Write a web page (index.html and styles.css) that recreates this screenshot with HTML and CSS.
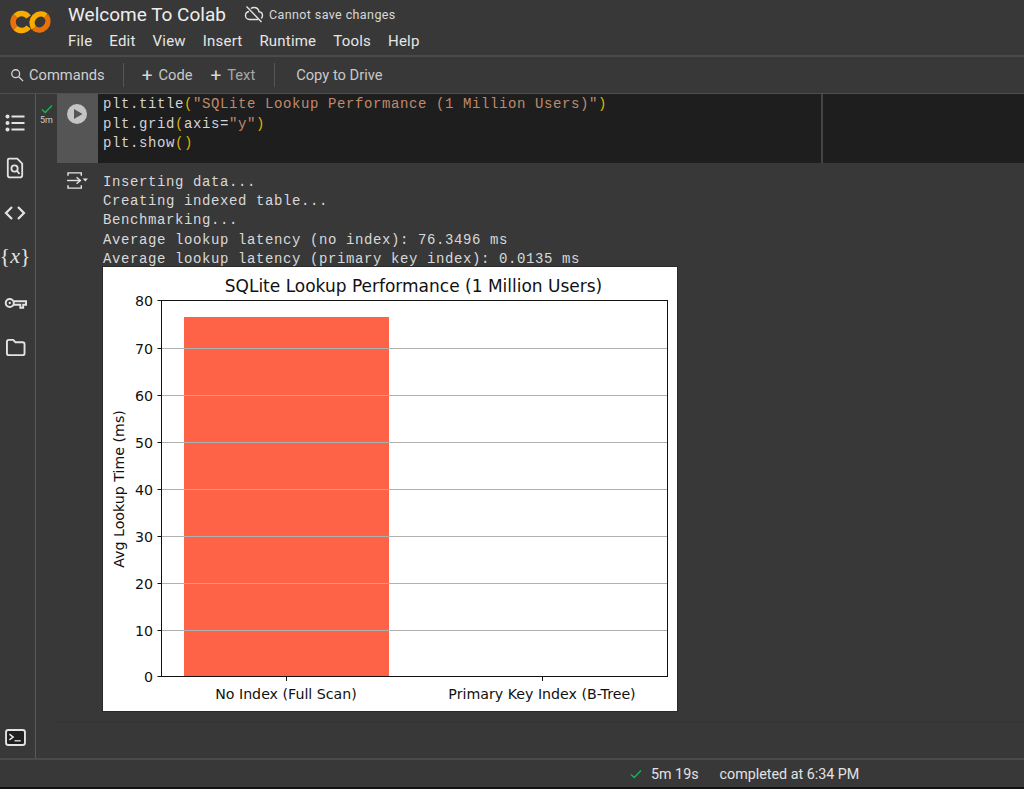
FILE: index.html
```html
<html>
<head>
    <link rel="stylesheet" href="styles.css">
</head>
<body>
    <header class="top">
        <svg class="logo" viewBox="0 0 42 26" width="42" height="26" fill="none" stroke-width="5.5">
            <path d="M18.5 8 A8.5 8.5 0 0 0 5.5 7" stroke="#f9ab00"/>
            <path d="M5.5 7 A8.5 8.5 0 0 0 5.5 19" stroke="#e8710a"/>
            <path d="M5.5 19 A8.5 8.5 0 0 0 18.5 18" stroke="#f9ab00"/>
            <path d="M23.9 19.1 A8.7 8.7 0 0 1 36.1 6.9" stroke="#f9ab00"/>
            <path d="M36.1 6.9 A8.7 8.7 0 0 1 23.9 19.1" stroke="#e8710a"/>
        </svg>
        <div class="top-text">
            <div class="title-row">
                <span class="doc-title">Welcome To Colab</span>
                <svg class="cloud" viewBox="0 0 20 20" width="20" height="20" fill="none" stroke="#e3e3e3" stroke-width="1.4">
                    <path d="M5 7.5 C2.5 8 1.5 9.8 1.5 11.5 C1.5 13.8 3.3 15.5 5.5 15.5 H14"/>
                    <path d="M6.8 4.5 C7.8 3.8 8.8 3.5 10 3.5 C12.6 3.5 14.6 5.4 15 7.8 C17 8 18.5 9.6 18.5 11.6 C18.5 12.8 18 13.8 17.2 14.5"/>
                    <path d="M2.5 2.5 L17.5 18"/>
                </svg>
                <span class="save-note">Cannot save changes</span>
            </div>
            <nav class="menu">
                <span>File</span>
                <span>Edit</span>
                <span>View</span>
                <span>Insert</span>
                <span>Runtime</span>
                <span>Tools</span>
                <span>Help</span>
            </nav>
        </div>
    </header>

    <div class="toolbar">
        <div class="tool tool-commands">
            <svg viewBox="0 0 16 16" width="14" height="14" fill="none" stroke="#d5d5d5" stroke-width="1.5">
                <circle cx="6.5" cy="6.5" r="4.5"/>
                <path d="M10 10 L15 15"/>
            </svg>
            <span>Commands</span>
        </div>
        <div class="divider"></div>
        <div class="tool tool-add"><b>+</b><span>Code</span></div>
        <div class="tool tool-add tool-text"><b>+</b><span>Text</span></div>
        <div class="divider divider-drive"></div>
        <div class="tool">Copy to Drive</div>
    </div>

    <div class="workspace">
        <aside class="rail">
            <div class="rail-icons">
                <svg viewBox="0 0 20 20" width="20" height="20" fill="#e3e3e3">
                    <circle cx="2.5" cy="3.5" r="2"/><circle cx="2.5" cy="10" r="2"/><circle cx="2.5" cy="16.5" r="2"/>
                    <rect x="6.5" y="2.5" width="13" height="2"/><rect x="6.5" y="9" width="13" height="2"/><rect x="6.5" y="15.5" width="13" height="2"/>
                </svg>
                <svg viewBox="0 0 20 24" width="18" height="22" fill="none" stroke="#e3e3e3" stroke-width="2">
                    <path d="M3.5 1.5 H12.5 L18 7 V20 Q18 22.5 15.5 22.5 H4.5 Q2 22.5 2 20 V3 Q2 1.5 3.5 1.5 Z"/>
                    <circle cx="9.5" cy="12.5" r="3.5"/>
                    <path d="M12 15 L15 18.5"/>
                </svg>
                <svg viewBox="0 0 22 16" width="22" height="16" fill="none" stroke="#e3e3e3" stroke-width="2.2">
                    <path d="M8 2 L2 8 L8 14"/>
                    <path d="M14 2 L20 8 L14 14"/>
                </svg>
                <div class="var-icon">{<i>x</i>}</div>
                <svg viewBox="0 0 24 14" width="23" height="14" fill="none" stroke="#e3e3e3" stroke-width="2">
                    <circle cx="6" cy="7" r="4.2"/>
                    <circle cx="6" cy="7" r="1.2" fill="#e3e3e3" stroke="none"/>
                    <path d="M10 5.2 H23 V8.8 H20 V12 H17 V8.8 H10"/>
                </svg>
                <svg viewBox="0 0 22 20" width="21" height="19" fill="none" stroke="#e3e3e3" stroke-width="2">
                    <path d="M2 4 Q2 2 4 2 H8.5 L11 4.5 H18.5 Q20.5 4.5 20.5 6.5 V16 Q20.5 18 18.5 18 H4 Q2 18 2 16 Z"/>
                </svg>
            </div>
            <svg class="terminal" viewBox="0 0 22 18" width="21" height="17">
                <rect x="1" y="1" width="20" height="16" rx="2.5" fill="#202020" stroke="#e3e3e3" stroke-width="2"/>
                <path d="M4.5 5.5 L8.5 8.5 L4.5 11.5" fill="none" stroke="#e3e3e3" stroke-width="1.6"/>
                <path d="M10 12.5 H16.5" stroke="#e3e3e3" stroke-width="1.4"/>
            </svg>
        </aside>

        <div class="notebook">
            <div class="exec-col">
                <svg viewBox="0 0 12 10" width="12" height="10" fill="none" stroke="#0fb85c" stroke-width="1.4">
                    <path d="M1 5.5 L4.2 8.5 L11 1.5"/>
                </svg>
                <span>5m</span>
            </div>
            <div class="cell">
                <div class="code-row">
                    <div class="run-col">
                        <svg viewBox="0 0 20 20" width="20" height="20">
                            <circle cx="10" cy="10" r="10" fill="#c4c4c4"/>
                            <path d="M7 5 L15.5 10 L7 15 Z" fill="#555555"/>
                        </svg>
                    </div>
<pre class="code">plt.title<span class="paren">(</span><span class="str">"SQLite Lookup Performance (1 Million Users)"</span><span class="paren">)</span>
plt.grid<span class="paren">(</span>axis=<span class="str">"y"</span><span class="paren">)</span>
plt.show<span class="paren">()</span></pre>
                    <div class="code-side"></div>
                </div>
                <div class="output-row">
                    <div class="output-icon">
                        <svg viewBox="0 0 24 20" width="23" height="19" fill="none" stroke="#e3e3e3" stroke-width="1.5">
                            <path d="M2 5 V2 H16 V5"/>
                            <path d="M1 10 H15"/>
                            <path d="M11 6.5 L15 10 L11 13.5"/>
                            <path d="M2 15 V18 H16 V15"/>
                            <path d="M17.5 8 H23 L20.2 11 Z" fill="#e3e3e3" stroke="none"/>
                        </svg>
                    </div>
                    <div class="output">
<pre class="stdout">Inserting data...
Creating indexed table...
Benchmarking...
Average lookup latency (no index): 76.3496 ms
Average lookup latency (primary key index): 0.0135 ms</pre>
                        <svg class="chart" viewBox="0 0 574 444" width="574" height="444">
                            <rect width="574" height="444" fill="#ffffff"/>
                            <text class="chart-title" x="310.5" y="24.5" text-anchor="middle">SQLite Lookup Performance (1 Million Users)</text>
                            <rect x="81" y="50" width="205" height="360" fill="#ff6347"/>
                            <g class="grid-lines">
                                <path d="M58.5 81.5 H564.5"/>
                                <path d="M58.5 128.5 H564.5"/>
                                <path d="M58.5 175.5 H564.5"/>
                                <path d="M58.5 222.5 H564.5"/>
                                <path d="M58.5 269.5 H564.5"/>
                                <path d="M58.5 316.5 H564.5"/>
                                <path d="M58.5 363.5 H564.5"/>
                            </g>
                            <rect class="axes" x="58.5" y="33.5" width="506" height="376"/>
                            <g class="ticks">
                                <path d="M54.5 33.5 H58.5"/>
                                <path d="M54.5 81.5 H58.5"/>
                                <path d="M54.5 128.5 H58.5"/>
                                <path d="M54.5 175.5 H58.5"/>
                                <path d="M54.5 222.5 H58.5"/>
                                <path d="M54.5 269.5 H58.5"/>
                                <path d="M54.5 316.5 H58.5"/>
                                <path d="M54.5 363.5 H58.5"/>
                                <path d="M54.5 409.5 H58.5"/>
                                <path d="M183.5 409.5 V414"/>
                                <path d="M439.5 409.5 V414"/>
                            </g>
                            <g class="chart-label" text-anchor="end">
                                <text x="50" y="39">80</text>
                                <text x="50" y="87">70</text>
                                <text x="50" y="134">60</text>
                                <text x="50" y="181">50</text>
                                <text x="50" y="228">40</text>
                                <text x="50" y="275">30</text>
                                <text x="50" y="322">20</text>
                                <text x="50" y="369">10</text>
                                <text x="50" y="415">0</text>
                            </g>
                            <g class="chart-label" text-anchor="middle">
                                <text x="183" y="432">No Index (Full Scan)</text>
                                <text x="439" y="432">Primary Key Index (B-Tree)</text>
                                <text transform="translate(21 222) rotate(-90)">Avg Lookup Time (ms)</text>
                            </g>
                        </svg>
                    </div>
                </div>
            </div>
        </div>
    </div>

    <footer class="status">
        <svg viewBox="0 0 12 10" width="12" height="10" fill="none" stroke="#0fb85c" stroke-width="1.3">
            <path d="M1 5.5 L4.2 8.5 L11 1.5"/>
        </svg>
        <span class="status-time">5m 19s</span>
        <span class="status-done">completed at 6:34 PM</span>
    </footer>
</body>
</html>
```

FILE: styles.css
```css
* {
    margin: 0;
    padding: 0;
    box-sizing: border-box;
}
html, body {
    height: 789px;
    overflow: hidden;
}
body {
    display: flex;
    flex-direction: column;
    background-color: #383838;
    color: #e3e3e3;
    font-family: Roboto, "Liberation Sans", sans-serif;
    border-bottom: 2px solid #111111;
}
.top {
    height: 57px;
    flex: none;
    display: flex;
    border-bottom: 2px solid #4a4a4a;
}
.logo {
    margin: 9px 0 0 10px;
}
.top-text {
    margin-left: 16px;
}
.title-row {
    display: flex;
    align-items: center;
    height: 28px;
}
.doc-title {
    font-size: 19px;
    color: #eeeeee;
}
.cloud {
    margin-left: 18px;
}
.save-note {
    margin-left: 5px;
    font-size: 12.5px;
    letter-spacing: 0.4px;
    color: #d8d8d8;
}
.menu {
    display: flex;
    gap: 17px;
    margin-top: 4px;
    font-size: 15px;
    letter-spacing: 0.2px;
    color: #e6e6e6;
}
.toolbar {
    height: 37px;
    flex: none;
    display: flex;
    align-items: center;
    border-bottom: 1px solid #4f4f4f;
    font-size: 14.7px;
    color: #c8c8c8;
}
.tool {
    display: flex;
    align-items: center;
}
.tool-commands {
    gap: 5px;
    margin-left: 10px;
    color: #cfcfcf;
}
.tool-add b {
    font-weight: 400;
    font-size: 19px;
    margin-right: 6px;
    color: #d5d5d5;
}
.tool-text {
    margin-left: 18px;
    color: #a8a8a8;
}
.divider {
    width: 1px;
    height: 24px;
    background: #555555;
    margin: 0 18px 0 18px;
}
.divider-drive {
    margin: 0 21px 0 19px;
}
.workspace {
    flex: 1;
    display: flex;
    min-height: 0;
}
.rail {
    width: 36px;
    flex: none;
    border-right: 1px solid #5a5a5a;
    display: flex;
    flex-direction: column;
    justify-content: space-between;
    align-items: center;
    padding: 6px 5px 12px 0;
}
.rail-icons {
    display: grid;
    grid-auto-rows: 45px;
    align-items: center;
    justify-items: center;
}
.var-icon {
    font-family: "Liberation Serif", serif;
    font-size: 22px;
    line-height: 26px;
    margin-bottom: 4px;
}
.notebook {
    flex: 1;
    display: flex;
}
.exec-col {
    width: 21px;
    flex: none;
    display: flex;
    flex-direction: column;
    align-items: center;
    padding-top: 10px;
    font-size: 9px;
    color: #cccccc;
}
.exec-col span {
    line-height: 12px;
}
.cell {
    flex: 1;
    height: 629px;
    border-bottom: 1px solid #333333;
}
.code-row {
    height: 69px;
    display: flex;
    background: #1e1e1e;
}
.run-col {
    width: 41px;
    flex: none;
    background: #555555;
    padding: 10px 0 0 10px;
}
.code {
    width: 725px;
    flex: none;
    padding: 1px 0 0 5px;
    font-family: "Liberation Mono", monospace;
    font-size: 14px;
    letter-spacing: 0.6px;
    line-height: 19.5px;
    color: #d4d4d4;
    border-right: 2px solid #444444;
}
.paren {
    color: #d9b300;
}
.str {
    color: #c08a6c;
}
.output-row {
    display: flex;
}
.output-icon {
    width: 41px;
    flex: none;
    padding: 8px 0 0 9px;
}
.output {
    padding: 9px 0 0 5px;
}
.stdout {
    padding-top: 0.6px;
    font-family: "Liberation Mono", monospace;
    font-size: 14px;
    letter-spacing: 0.6px;
    line-height: 19.4px;
    height: 95px;
    color: #d8d8d8;
}
.chart {
    display: block;
    outline: 1px solid #2a2a2a;
}
.chart-title {
    font-family: "DejaVu Sans", sans-serif;
    font-size: 17px;
    fill: #111111;
}
.chart-label {
    font-family: "DejaVu Sans", sans-serif;
    font-size: 14.2px;
    fill: #111111;
}
.grid-lines path {
    stroke: #b0b0b0;
    stroke-width: 1;
    fill: none;
}
.axes {
    fill: none;
    stroke: #111111;
    stroke-width: 1;
}
.ticks path {
    stroke: #111111;
    stroke-width: 1;
}
.status {
    height: 29px;
    flex: none;
    display: flex;
    align-items: center;
    border-top: 2px solid #4a4a4a;
    padding-left: 630px;
    font-size: 14.3px;
    color: #e3e3e3;
}
.status-time {
    margin-left: 9px;
}
.status-done {
    margin-left: 21px;
}
```
